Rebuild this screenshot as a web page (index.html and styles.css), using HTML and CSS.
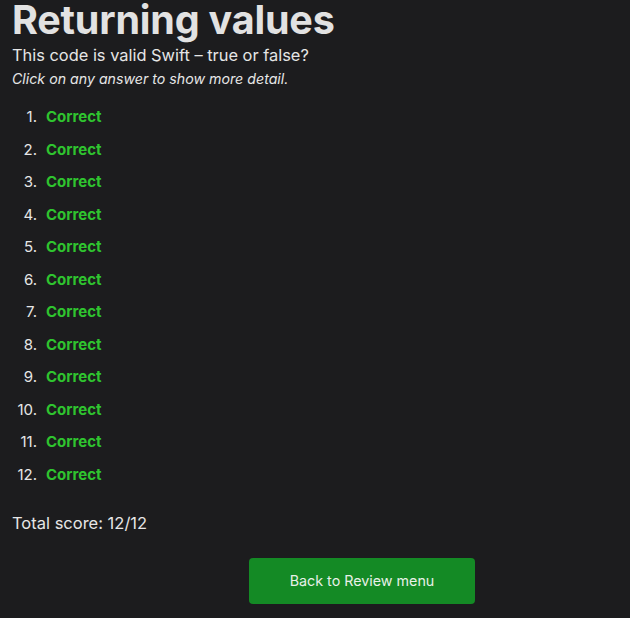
FILE: index.html
```html
<!DOCTYPE html>
<html>
<head>
<meta charset="utf-8">
<link rel="stylesheet" href="styles.css">
</head>
<body>
<main class="page">
  <h1 class="title">Returning values</h1>
  <p class="subtitle">This code is valid Swift – true or false?</p>
  <p class="hint">Click on any answer to show more detail.</p>
  <ol class="answers">
    <li><span class="num">1.</span><span class="correct">Correct</span></li>
    <li><span class="num">2.</span><span class="correct">Correct</span></li>
    <li><span class="num">3.</span><span class="correct">Correct</span></li>
    <li><span class="num">4.</span><span class="correct">Correct</span></li>
    <li><span class="num">5.</span><span class="correct">Correct</span></li>
    <li><span class="num">6.</span><span class="correct">Correct</span></li>
    <li><span class="num">7.</span><span class="correct">Correct</span></li>
    <li><span class="num">8.</span><span class="correct">Correct</span></li>
    <li><span class="num">9.</span><span class="correct">Correct</span></li>
    <li><span class="num">10.</span><span class="correct">Correct</span></li>
    <li><span class="num">11.</span><span class="correct">Correct</span></li>
    <li><span class="num">12.</span><span class="correct">Correct</span></li>
  </ol>
  <p class="score">Total score: 12/12</p>
  <div class="actions">
    <button class="back">Back to Review menu</button>
  </div>
</main>
</body>
</html>
```
FILE: styles.css
```css
html, body {
  margin: 0;
  padding: 0;
  background: #1c1c1e;
}
body {
  font-family: Inter, "Noto Sans", sans-serif;
  color: #e6e6e6;
}
.page {
  padding: 0 12px;
}
.title {
  margin: 0;
  font-size: 39.5px;
  font-weight: 700;
  line-height: 40px;
  letter-spacing: -0.2px;
  color: #e2e2e2;
}
.subtitle {
  margin: 4px 0 0;
  font-size: 16.4px;
  line-height: 22px;
}
.hint {
  margin: 3px 0 0;
  font-size: 14.2px;
  font-style: italic;
  line-height: 20px;
}
.answers {
  list-style: none;
  margin: 18px 0 0;
  padding: 0;
  font-size: 15px;
}
.answers li {
  display: flex;
  align-items: baseline;
  gap: 9px;
  line-height: 20px;
  margin-bottom: 12.5px;
}
.num {
  width: 25px;
  text-align: right;
}
.correct {
  color: #2fc42f;
  font-weight: 700;
}
.score {
  margin: 27px 0 0;
  font-size: 16.5px;
  line-height: 22px;
}
.actions {
  margin-top: 24px;
  padding-left: 237px;
}
.back {
  width: 226px;
  height: 46px;
  border: none;
  border-radius: 4px;
  background: #148a25;
  color: #e8f0e8;
  font-family: Inter, "Noto Sans", sans-serif;
  font-size: 14.3px;
}
```
